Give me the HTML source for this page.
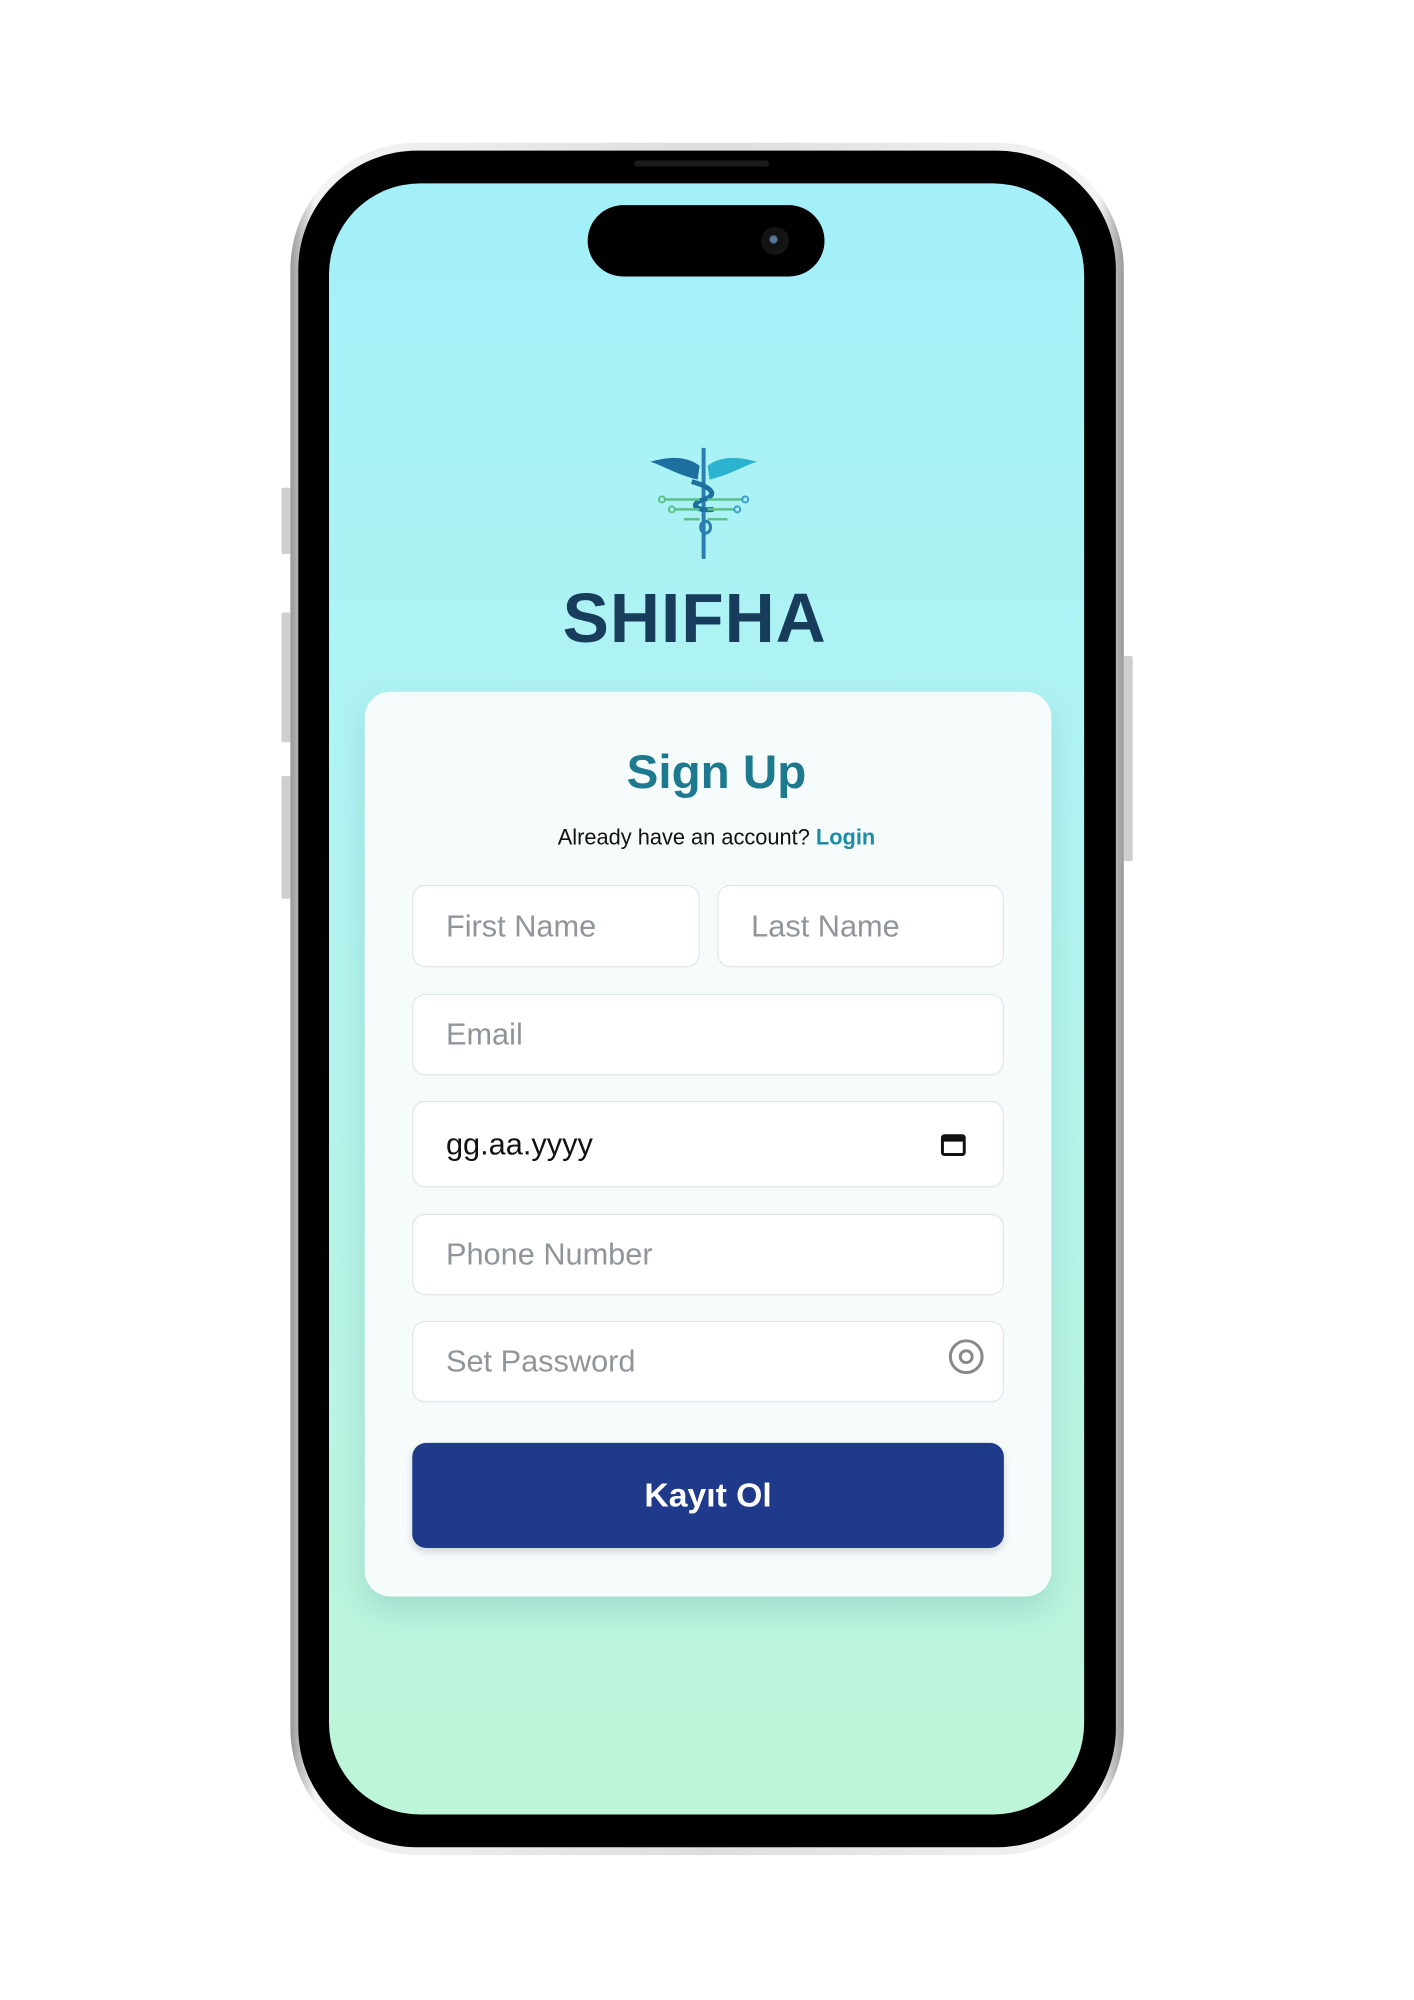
<!DOCTYPE html>
<html><head><meta charset="utf-8"><style>
*{box-sizing:border-box;margin:0;padding:0}
body{width:1414px;height:2000px;background:#fff;position:relative;font-family:"Liberation Sans",sans-serif;overflow:hidden}
#w{position:absolute;left:0;top:0;width:1414px;height:2000px;transform:scale(0.991);transform-origin:0 0}
.frame{position:absolute;left:293px;top:144px;width:841px;height:1728px;border-radius:128px;background:linear-gradient(90deg,#999,#f4f4f4 3%,#ddd 50%,#f4f4f4 97%,#999);padding:8px}
.bezel{width:100%;height:100%;border-radius:120px;background:#000}
.screen{position:absolute;left:332px;top:185px;width:762px;height:1646px;border-radius:92px;background:linear-gradient(180deg,#a3f0f9 0%,#b2f4f2 40%,#bdf5d8 100%);overflow:hidden}
.island{position:absolute;left:593px;top:207px;width:239px;height:72px;border-radius:36px;background:#000}
.cam{position:absolute;left:768px;top:229px;width:28px;height:28px;border-radius:50%;background:radial-gradient(circle at 45% 45%,#5a7a9a 0 3px,#111 5px,#1a1a1a 100%)}
.speaker{position:absolute;left:640px;top:162px;width:136px;height:6px;border-radius:3px;background:#1c1c1c}
.btn{position:absolute;background:#cfcfcf;border-radius:2px}
.logo{position:absolute;left:650px;top:448px}
.brand{position:absolute;left:0;width:1414px;top:584px;text-align:center;font-size:70px;font-weight:bold;color:#173c5c;padding-right:12px;letter-spacing:1px}
.card{position:absolute;left:368px;top:698px;width:693px;height:913px;border-radius:26px;background:#f6fbfc;box-shadow:0 14px 30px rgba(80,150,150,.25)}
.title{position:absolute;left:16px;width:1414px;top:752px;text-align:center;font-size:48px;font-weight:bold;color:#1d7a8e}
.sub{position:absolute;left:16px;width:1414px;top:832px;text-align:center;font-size:22px;color:#111}
.sub b{color:#1d8ca6}
.in{position:absolute;background:#fff;border:1.5px solid #dde2e5;border-radius:13px;font-size:31px;color:#8f959a;padding-left:33px;display:flex;align-items:center}
.kb{position:absolute;left:416px;top:1456px;width:597px;height:106px;border-radius:14px;background:#1f3a8a;color:#fff;font-weight:bold;font-size:34px;display:flex;align-items:center;justify-content:center;box-shadow:0 4px 8px rgba(0,0,0,.15)}
</style></head><body><div id="w">
<div class="btn" style="left:284px;top:492px;width:9px;height:67px"></div>
<div class="btn" style="left:284px;top:618px;width:9px;height:131px"></div>
<div class="btn" style="left:284px;top:783px;width:9px;height:124px"></div>
<div class="btn" style="left:1134px;top:662px;width:9px;height:207px"></div>
<div class="frame"><div class="bezel"></div></div>
<div class="screen"></div>
<div class="speaker"></div>
<div class="island"></div>
<div class="cam"></div>
<svg class="logo" width="120" height="120" viewBox="0 0 120 120">
<line x1="60" y1="4" x2="60" y2="116" stroke="#2a7fb0" stroke-width="4"/>
<path d="M56 22 C40 10 20 14 6 18 C20 22 30 30 54 36Z" fill="#1d6fa0"/>
<path d="M64 22 C80 10 100 14 114 18 C100 22 90 30 66 36Z" fill="#2bb3d0"/>
<path d="M48 38 C70 44 74 52 60 56 C46 60 50 68 70 66" fill="none" stroke="#1d6fa0" stroke-width="5"/>
<path d="M20 56 H56 M30 66 H56 M100 56 H64 M92 66 H64 M40 76 H56 M84 76 H64" stroke="#5cc08a" stroke-width="2.5" fill="none"/>
<circle cx="18" cy="56" r="3" fill="none" stroke="#5cc08a" stroke-width="2"/><circle cx="102" cy="56" r="3" fill="none" stroke="#3aa0d0" stroke-width="2"/>
<circle cx="28" cy="66" r="3" fill="none" stroke="#5cc08a" stroke-width="2"/><circle cx="94" cy="66" r="3" fill="none" stroke="#3aa0d0" stroke-width="2"/>
<ellipse cx="62" cy="84" rx="5" ry="6" fill="none" stroke="#2a7fb0" stroke-width="3"/>
</svg>
<div class="brand">SHIFHA</div>
<div class="card"></div>
<div class="title">Sign Up</div>
<div class="sub">Already have an account? <b>Login</b></div>
<div class="in" style="left:416px;top:893px;width:290px;height:83px">First Name</div>
<div class="in" style="left:724px;top:893px;width:289px;height:83px">Last Name</div>
<div class="in" style="left:416px;top:1003px;width:597px;height:82px">Email</div>
<div class="in" style="left:416px;top:1111px;width:597px;height:87px;color:#111">gg.aa.yyyy
<svg style="position:absolute;right:37px;top:30px" width="26" height="26" viewBox="0 0 26 26"><rect x="2" y="4" width="22" height="19" rx="2" fill="none" stroke="#111" stroke-width="3"/><rect x="2" y="4" width="22" height="6" fill="#111"/></svg></div>
<div class="in" style="left:416px;top:1225px;width:597px;height:82px">Phone Number</div>
<div class="in" style="left:416px;top:1333px;width:597px;height:82px">Set Password
<svg style="position:absolute;right:18px;top:16px" width="38" height="38" viewBox="0 0 38 38"><circle cx="19" cy="19" r="16" fill="none" stroke="#888" stroke-width="3"/><circle cx="19" cy="19" r="6" fill="none" stroke="#888" stroke-width="3"/></svg></div>
<div class="kb">Kayıt Ol</div>
</div></body></html>
